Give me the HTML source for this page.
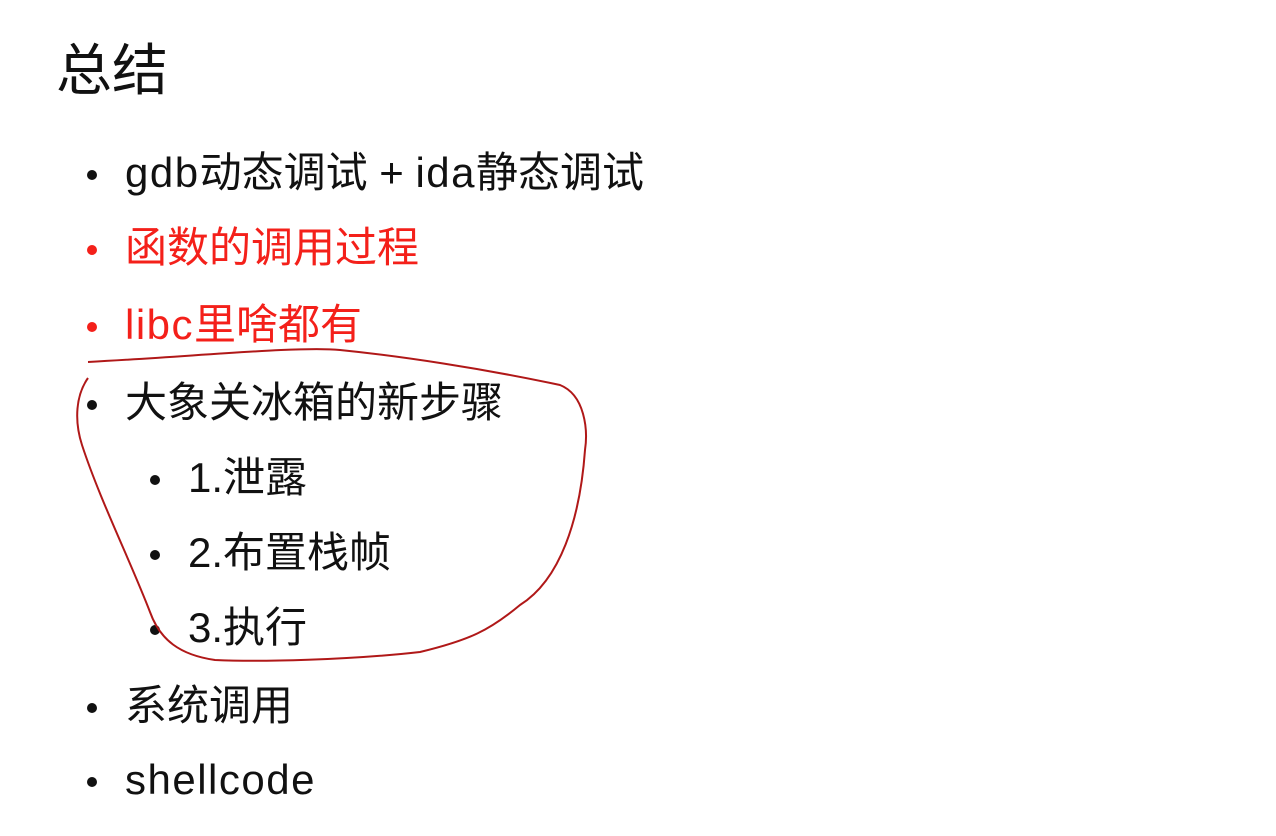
<!DOCTYPE html>
<html><head><meta charset="utf-8"><style>
body{margin:0;width:1276px;height:836px;background:#fff;position:relative;overflow:hidden;font-family:"Liberation Sans","Noto Sans CJK SC",sans-serif;color:#111}
.t{position:absolute;left:56px;top:38px;font-size:56px;line-height:66px}
.r{position:absolute;font-size:42px;line-height:46px;white-space:nowrap}
.l{letter-spacing:1.5px}
.r::before{content:"";position:absolute;width:10px;height:10px;border-radius:50%;background:currentColor;left:-38px;top:20px}
.red{color:#f4201a}
</style></head><body>
<div class="t">总结</div>
<div class="r" style="left:125px;top:150px"><span class="l">gdb</span>动态调试 + <span class="l">ida</span>静态调试</div>
<div class="r red" style="left:125px;top:225px">函数的调用过程</div>
<div class="r red" style="left:125px;top:302px"><span class="l">libc</span>里啥都有</div>
<div class="r" style="left:125px;top:380px">大象关冰箱的新步骤</div>
<div class="r" style="left:188px;top:455px">1.泄露</div>
<div class="r" style="left:188px;top:530px">2.布置栈帧</div>
<div class="r" style="left:188px;top:605px">3.执行</div>
<div class="r" style="left:125px;top:683px">系统调用</div>
<div class="r l" style="left:125px;top:757px">shellcode</div>
<svg width="1276" height="836" style="position:absolute;left:0;top:0" fill="none" stroke="#b01818" stroke-width="2">
<path d="M88 362 C200 356 300 346 340 350 C400 356 480 368 560 385 C585 395 588 430 585 450 C580 520 560 580 520 605 C490 630 470 640 420 652 C350 660 260 662 215 660 C180 655 160 640 150 612 C130 560 100 500 82 445 C74 420 76 395 88 378"/>
</svg>
</body></html>
